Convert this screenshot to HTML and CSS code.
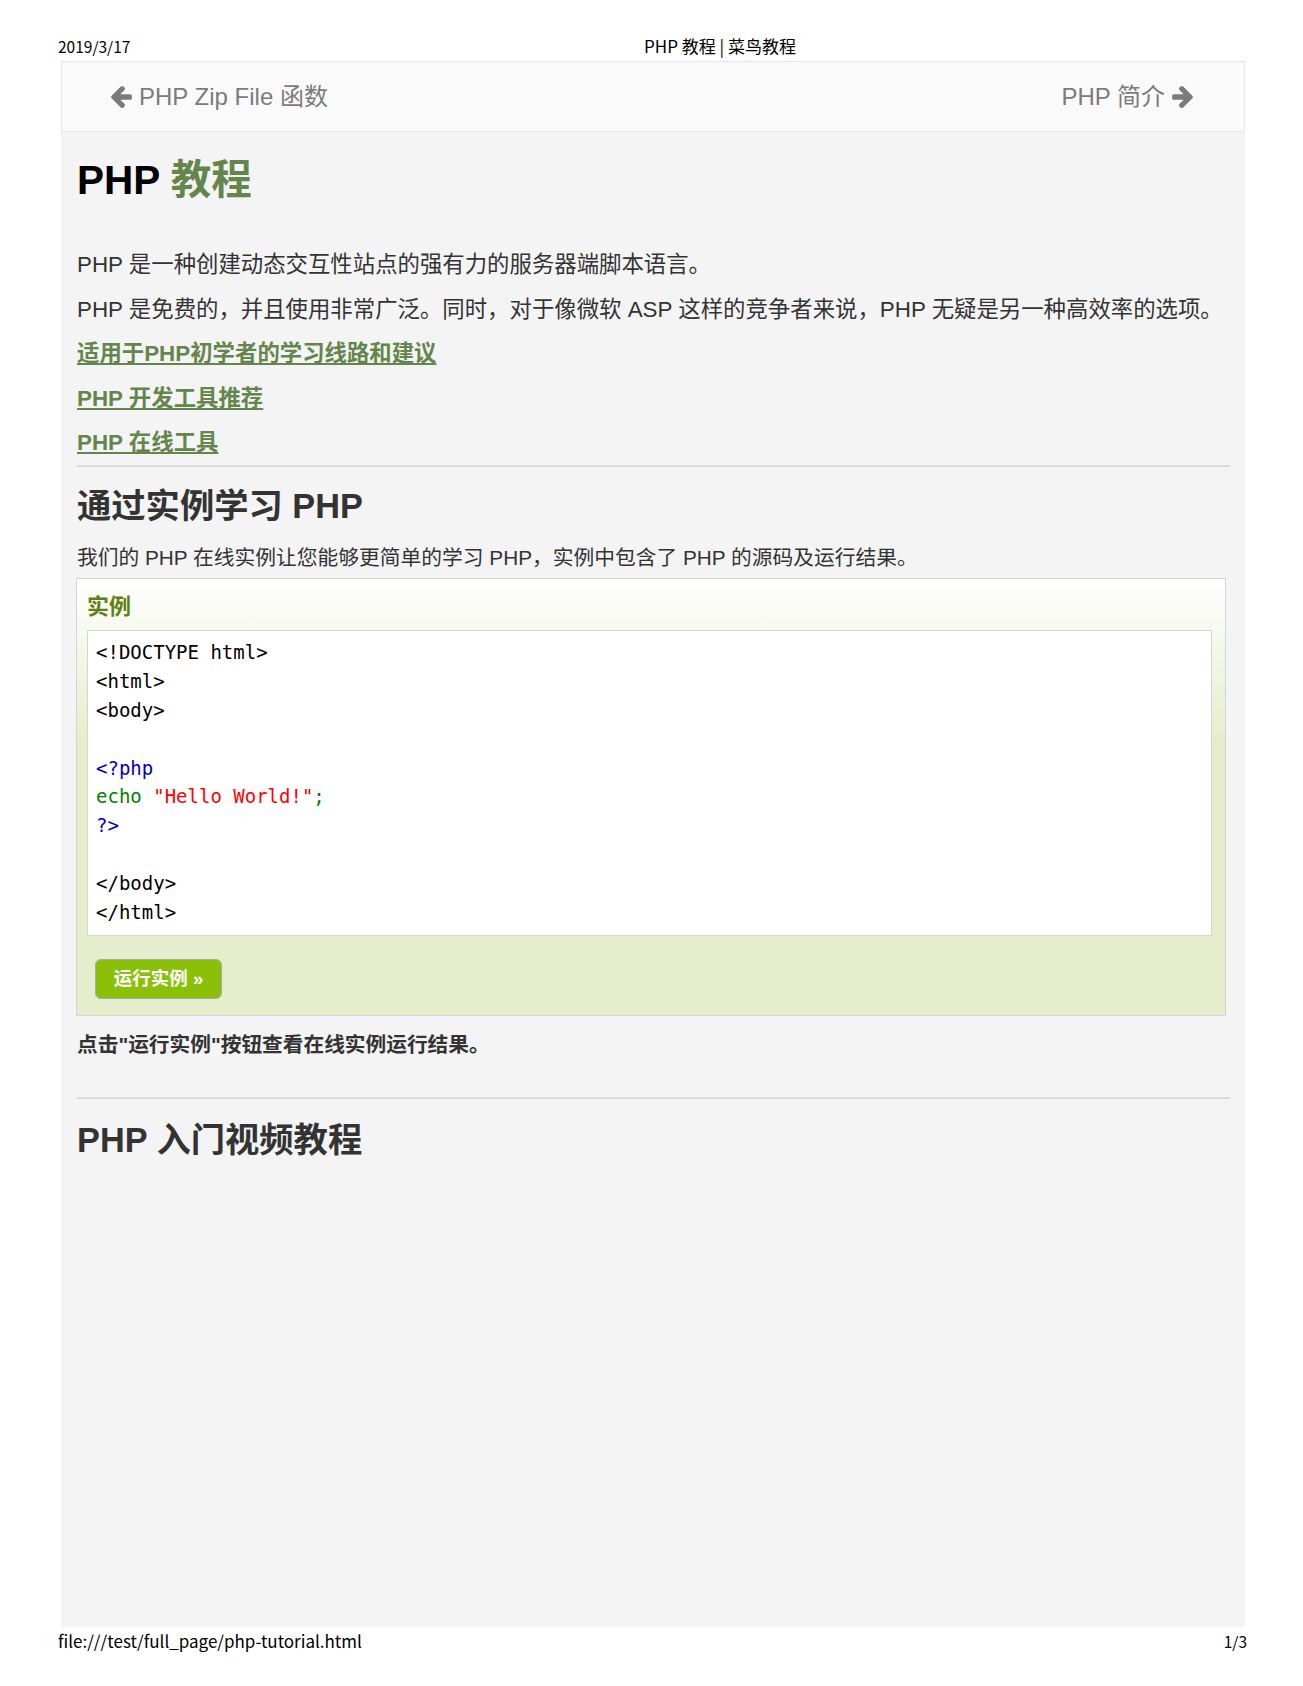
FILE: index.html
```html
<!DOCTYPE html>
<html lang="zh-CN">
<head>
<meta charset="utf-8">
<title>PHP 教程 | 菜鸟教程</title>
<link rel="stylesheet" href="styles.css">
</head>
<body>
<div class="print-head">
  <span class="ph-date">2019/3/17</span>
  <span class="ph-title">PHP 教程 | 菜鸟教程</span>
</div>
<div class="sheet">
  <div class="nav">
    <a class="nav-link" href="#"><svg class="arrow" viewBox="64 181 1472 1558"><path d="M1536 896v128q0 53-32.5 90.5t-84.5 37.5h-704l293 294q38 36 38 90t-38 90l-75 76q-37 37-90 37-52 0-91-37l-651-652q-37-37-37-90 0-52 37-91l651-650q38-38 91-38 52 0 90 38l75 74q38 38 38 91t-38 91l-293 293h704q52 0 84.5 37.5t32.5 90.5z"/></svg><span>PHP Zip File 函数</span></a>
    <a class="nav-link" href="#"><span>PHP 简介</span><svg class="arrow flip" viewBox="64 181 1472 1558"><path d="M1536 896v128q0 53-32.5 90.5t-84.5 37.5h-704l293 294q38 36 38 90t-38 90l-75 76q-37 37-90 37-52 0-91-37l-651-652q-37-37-37-90 0-52 37-91l651-650q38-38 91-38 52 0 90 38l75 74q38 38 38 91t-38 91l-293 293h704q52 0 84.5 37.5t32.5 90.5z"/></svg></a>
  </div>
  <div class="article">
    <h1 class="title">PHP <span class="green">教程</span></h1>
    <p class="para first">PHP 是一种创建动态交互性站点的强有力的服务器端脚本语言。</p>
    <p class="para">PHP 是免费的，并且使用非常广泛。同时，对于像微软 ASP 这样的竞争者来说，PHP 无疑是另一种高效率的选项。</p>
    <p class="para"><a class="link" href="#">适用于PHP初学者的学习线路和建议</a></p>
    <p class="para"><a class="link" href="#">PHP 开发工具推荐</a></p>
    <p class="para"><a class="link" href="#">PHP 在线工具</a></p>
    <hr class="rule">
    <h2 class="heading">通过实例学习 PHP</h2>
    <p class="para small">我们的 PHP 在线实例让您能够更简单的学习 PHP，实例中包含了 PHP 的源码及运行结果。</p>
    <div class="example">
      <h2 class="example-title">实例</h2>
      <div class="code"><div>&lt;!DOCTYPE html&gt;</div><div>&lt;html&gt;</div><div>&lt;body&gt;</div><div>&nbsp;</div><div class="c-blue">&lt;?php</div><div><span class="c-green">echo </span><span class="c-red">"Hello World!"</span><span class="c-green">;</span></div><div class="c-blue">?&gt;</div><div>&nbsp;</div><div>&lt;/body&gt;</div><div>&lt;/html&gt;</div></div>
      <a class="tryit" href="#">运行实例 »</a>
    </div>
    <p class="caption">点击"运行实例"按钮查看在线实例运行结果。</p>
    <hr class="rule second">
    <h2 class="heading video">PHP 入门视频教程</h2>
  </div>
</div>
<div class="print-foot">
  <span class="pf-url">file:///test/full_page/php-tutorial.html</span>
  <span class="pf-page">1/3</span>
</div>
</body>
</html>
```
FILE: styles.css
```css
html, body {
  margin: 0;
  padding: 0;
  background: #ffffff;
}
body {
  font-family: "Liberation Sans", "Noto Sans CJK SC", sans-serif;
  color: #333333;
}
.print-head {
  display: grid;
  grid-template-columns: 586px auto;
  align-items: center;
  padding: 31px 0 0 58px;
  height: 30px;
  box-sizing: content-box;
  font-family: "Noto Sans CJK SC", sans-serif;
  line-height: 22px;
  color: #000;
}
.ph-date {
  font-size: 15.5px;
}
.ph-title {
  font-size: 17px;
}
.sheet {
  margin-left: 61px;
  width: 1184px;
  height: 1566px;
  background: #f4f4f4;
  box-sizing: border-box;
}
.nav {
  height: 71px;
  box-sizing: border-box;
  background: #fafafa;
  border: 1px solid #e5e6ec;
  display: flex;
  justify-content: space-between;
  align-items: center;
  padding: 0 51px 0 49px;
}
.nav-link {
  display: flex;
  align-items: center;
  gap: 7px;
  color: #7b7b7b;
  text-decoration: none;
  font-size: 24px;
  line-height: 30px;
}
.arrow {
  width: 21px;
  height: 22px;
  fill: #7b7b7b;
}
.arrow.flip {
  transform: scaleX(-1);
}
.article {
  padding: 0 15px 0 16px;
}
.title {
  margin: 24px 0 0;
  font-size: 40.5px;
  line-height: 48px;
  font-weight: bold;
  color: #000;
}
.green {
  color: #64854c;
}
.para {
  margin: 11.6px 0 0;
  font-size: 22.4px;
  line-height: 33px;
}
.para.first {
  margin-top: 44px;
}
.para.small {
  margin-top: 14px;
  font-size: 20.75px;
}
.link {
  color: #64854c;
  font-weight: bold;
  text-decoration: underline;
}
.rule {
  margin: 6px 0 0;
  border: 0;
  height: 2px;
  background: #dcdcdc;
}
.rule.second {
  margin-top: 37px;
}
.heading {
  margin: 19px 0 0;
  font-size: 34.3px;
  line-height: 41px;
  font-weight: bold;
  color: #333;
}
.heading.video {
  margin-top: 21px;
}
.example {
  margin: 4px 4px 0 -1px;
  border: 1px solid #d4d4d4;
  background-color: #e5eecc;
  background-image: linear-gradient(#ffffff, #e5eecc 160px);
  padding: 13px 13px 16px 10px;
}
.example-title {
  margin: 0;
  font-size: 22px;
  line-height: 30px;
  font-weight: bold;
  color: #617f10;
}
.code {
  margin-top: 8px;
  background: #ffffff;
  border: 1px solid #d4d4d4;
  padding: 7px 8px 9px 8px;
  font-family: "DejaVu Sans Mono", monospace;
  font-size: 19px;
  line-height: 28.8px;
  color: #000;
  white-space: pre;
}
.c-blue { color: #0000cd; }
.c-green { color: #008000; }
.c-red { color: #ff0000; }
.tryit {
  display: inline-block;
  margin: 23px 0 0 8px;
  width: 127px;
  height: 40px;
  box-sizing: border-box;
  border: 1px solid #aaaaaa;
  border-radius: 6px;
  background: #8ac007;
  color: #ffffff;
  font-weight: bold;
  font-size: 18.5px;
  line-height: 38px;
  text-align: center;
  text-decoration: none;
}
.caption {
  margin: 14px 0 0;
  font-size: 20.7px;
  line-height: 30px;
  font-weight: bold;
  color: #333;
}
.print-foot {
  display: flex;
  justify-content: space-between;
  align-items: center;
  padding: 3px 56px 0 58px;
  font-family: "Noto Sans CJK SC", sans-serif;
  line-height: 22px;
  color: #000;
}
.pf-url {
  font-size: 17px;
}
.pf-page {
  font-size: 15.5px;
}
```
